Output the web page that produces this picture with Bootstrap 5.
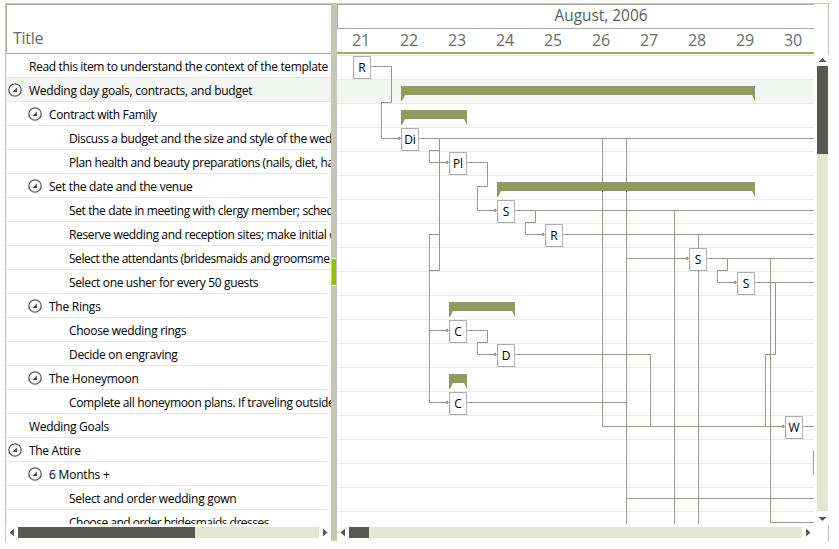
<!DOCTYPE html>
<html lang="en">
<head>
<meta charset="utf-8">
<title>Wedding plan</title>
<meta name="viewport" content="width=device-width, initial-scale=1">
<link href="https://cdn.jsdelivr.net/npm/bootstrap@5.3.0/dist/css/bootstrap.min.css" rel="stylesheet">
<style>
body{font-family:"Open Sans","Noto Sans",sans-serif;font-size:12px;line-height:1;color:#000;width:839px;height:549px}
.planner{width:825px;height:539px;margin:3px 0 0 5px;border-left:1px solid #c5c5b5;border-top:1px solid #c5c5b5}
.tree-pane{width:325px;height:538px}
.tree-head{height:50px;border:solid #a9aca6;border-width:1px 0 1px 1px;font-size:16px;letter-spacing:-.3px;color:#6b6b66;padding:0 0 7px 6px}
.tree-body{height:470px;border-left:1px solid #ececea}
.task-row{height:24px;border-bottom:1px solid #e8e8e8;white-space:nowrap}
.task-row span{padding-top:2px}
.task-row.current{background:#f3f5f3}
.lv0{padding-left:1px}.lv1{padding-left:21px}.lv3{padding-left:62px}
.lv0,.lv1{gap:7px}
.leaf0{padding-left:22px}
.splitter{width:6px;height:537px;background:#c5c6b6}
.grip{width:4px;height:28px;background:#94c100;border:solid #fff;border-width:1px 0;margin-top:254px}
.chart-pane{width:477px;height:538px}
.month{height:25px;width:477px;border:solid #a9aca6;border-width:1px 0 1px 1px;overflow:hidden;font-size:15.4px;color:#5b5b57}
.month span{width:526px;text-align:center;padding-bottom:1px}
.days{height:25px;border-bottom:2px solid #a0a975;overflow:hidden;font-size:16px;color:#6b6b66}
.days span{width:48px;text-align:center;letter-spacing:-.2px;padding-bottom:1px}
.scroll-h{height:11px;margin-top:3px}
.track{background:#e3e6d3}
.thumb{background:#575851}
.side{width:15px;height:538px}
.side-bar{width:11px;margin-left:3px}
.edge{width:1px;background:#c5c5b5}
svg{display:block;flex:none}
.tag{font-size:12px;text-anchor:middle;fill:#000;letter-spacing:0}
</style>
<script src="https://cdn.jsdelivr.net/npm/bootstrap@5.3.0/dist/js/bootstrap.bundle.min.js"></script>
</head>
<body class="bg-white overflow-hidden">
<svg width="0" height="0" class="position-absolute"><defs>
<g id="toggle"><circle cx="7" cy="7" r="6.2" fill="#fff" stroke="#5d5d58" stroke-width="1.3"/><path d="M9 4.5V9H4.5Z" fill="#4d4d48"/></g>
</defs></svg>
<main class="planner d-flex">
  <section class="tree-pane d-flex flex-column flex-shrink-0 overflow-hidden">
    <header class="tree-head d-flex align-items-end flex-shrink-0">Title</header>
    <div class="tree-body overflow-hidden flex-shrink-0" id="tree"></div>
    <div class="scroll-h d-flex flex-shrink-0">
      <svg width="12" height="11"><path d="M8 1.5V9.5L3.5 5.5Z" fill="#575851"/></svg>
      <div class="track d-flex flex-grow-1"><div class="thumb" style="width:177px"></div></div>
      <svg width="12" height="11"><path d="M4 1.5V9.5L8.5 5.5Z" fill="#575851"/></svg>
    </div>
  </section>
  <div class="splitter flex-shrink-0 d-flex justify-content-center"><div class="grip"></div></div>
  <section class="chart-pane flex-shrink-0 overflow-hidden">
    <header class="month d-flex align-items-center"><span class="flex-shrink-0">August, 2006</span></header>
    <div class="days d-flex align-items-center" id="days"></div>
    <svg id="chart" width="477" height="470" viewBox="337 54 477 470"></svg>
    <div class="scroll-h d-flex">
      <svg width="12" height="11"><path d="M8 1.5V9.5L3.5 5.5Z" fill="#575851"/></svg>
      <div class="track d-flex flex-grow-1"><div class="thumb" style="width:20px"></div></div>
      <svg width="12" height="11"><path d="M4 1.5V9.5L8.5 5.5Z" fill="#575851"/></svg>
    </div>
  </section>
  <aside class="side flex-shrink-0 d-flex flex-column">
    <div class="edge flex-shrink-0 ms-auto" style="height:51px"></div>
    <div class="side-bar flex-shrink-0 d-flex flex-column" style="height:470px">
      <svg width="11" height="11"><path d="M1.5 7H9.5L5.5 3Z" fill="#575851"/></svg>
      <div class="track flex-grow-1"><div class="thumb" style="height:88px"></div></div>
      <svg width="11" height="14"><path d="M1.5 6H9.5L5.5 10Z" fill="#575851"/></svg>
    </div>
    <div class="edge flex-shrink-0 ms-auto" style="height:17px"></div>
  </aside>
</main>
<script>
// level, title, tracking in px
const tasks=[
 ['leaf0','Read this item to understand the context of the template',-.35],
 ['lv0','Wedding day goals, contracts, and budget',-.25],
 ['lv1','Contract with Family',-.33],
 ['lv3','Discuss a budget and the size and style of the wed',-.35],
 ['lv3','Plan health and beauty preparations (nails, diet, hair',-.38],
 ['lv1','Set the date and the venue',-.27],
 ['lv3','Set the date in meeting with clergy member; sched',-.38],
 ['lv3','Reserve wedding and reception sites; make initial c',-.36],
 ['lv3','Select the attendants (bridesmaids and groomsme',-.46],
 ['lv3','Select one usher for every 50 guests',-.35],
 ['lv1','The Rings',-.25],
 ['lv3','Choose wedding rings',-.3],
 ['lv3','Decide on engraving',-.3],
 ['lv1','The Honeymoon',-.25],
 ['lv3','Complete all honeymoon plans. If traveling outside',-.37],
 ['leaf0','Wedding Goals',-.3],
 ['lv0','The Attire',-.3],
 ['lv1','6 Months +',-.2],
 ['lv3','Select and order wedding gown',-.3],
 ['lv3','Choose and order bridesmaids dresses',-.52]];
document.getElementById('tree').innerHTML=tasks.map(([c,t,k],i)=>
 `<div class="task-row d-flex align-items-center ${c}${i==1?' current':''}">${c=='lv0'||c=='lv1'?'<svg width="14" height="14"><use href="#toggle"/></svg>':''}<span style="letter-spacing:${k}px">${t}</span></div>`).join('');
let d='';for(let n=21;n<31;n++)d+=`<span class="flex-shrink-0">${n}</span>`;
document.getElementById('days').innerHTML=d;

// Chart: row lines, dependency links, summary brackets, task boxes
let s='<rect x="337" y="80" width="477" height="23" fill="#f3f5f3"/>';
for(let y=55;y<524;y+=24)s+=`<rect x="337" y="${y}" width="477" height="1" fill="#e8e8e8"/>`;
const links=['M371 66H391V102H381V138H401','M419 138H814','M439 138V270H429','M439 150H429V162H449','M439 234H429V402H449','M429 330H449',
 'M429 234V402','M467 162H487V186H477V210H497','M515 210H814','M535 210V222H525V234H545','M563 234H814','M602 138V426H785','M626 138V524','M626 258H689',
 'M707 258H814','M727 258V270H717V282H737','M755 282H814','M674 210V524','M698 234V524','M770 258V522H814','M775 282V354H765V426',
 'M467 330H487V342H477V354H497','M515 354H650V426','M467 402H626','M803 426H814','M626 498H814','M813 450V474'];
s+=`<path transform="translate(.5 .5)" d="${links.join('')}" fill="none" stroke="#96988a"/>`;
for(const [x,y] of [[401,138],[449,162],[497,210],[545,234],[689,258],[737,282],[449,330],[497,354],[449,402],[785,426]])
 s+=`<rect x="${x-3}" y="${y-1}" width="2" height="3" fill="#96988a"/>`;
for(const [a,b,y] of [[401,755,86],[401,467,110],[497,755,182],[449,515,302],[449,467,374]])
 s+=`<path d="M${a} ${y}H${b}V${y+15}L${b-3} ${y+9}H${a+4}L${a+1} ${y+15}H${a}Z" fill="#919b5e"/>`;
for(const [x,r,t] of [[353,0,'R'],[401,3,'Di'],[449,4,'Pl'],[497,6,'S'],[545,7,'R'],[689,8,'S'],[737,9,'S'],[449,11,'C'],[497,12,'D'],[449,14,'C'],[785,15,'W']])
 s+=`<rect x="${x+.5}" y="${56.5+24*r}" width="17" height="22" fill="#fff" stroke="#acacac"/><text class="tag" x="${x+9}" y="${72+24*r}">${t}</text>`;
document.getElementById('chart').innerHTML=s;
</script>
</body>
</html>
